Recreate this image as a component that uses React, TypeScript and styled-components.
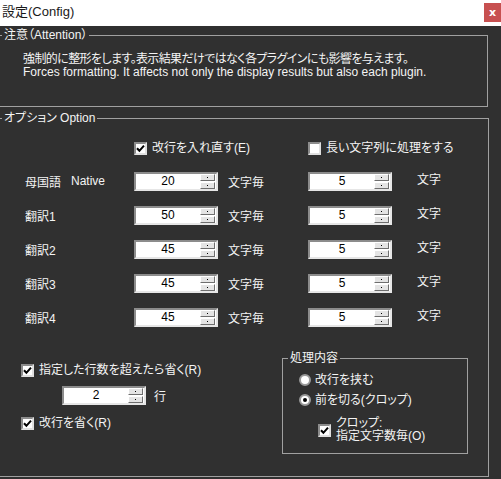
import React from 'react';
import styled, { createGlobalStyle } from 'styled-components';

const GlobalStyle = createGlobalStyle`
  html, body {
    margin: 0;
    padding: 0;
    background: #303030;
  }
  body {
    font-family: "Liberation Sans", "Noto Sans CJK JP", sans-serif;
    font-size: 12px;
    font-feature-settings: "palt";
  }
`;

interface SpinProps {
  value: number;
}

const Spin: React.FC<SpinProps> = ({ value }) => (
  <SpinField>
    <SpinValue>{value}</SpinValue>
    <SpinButtons>
      <SpinButton />
      <SpinButton />
    </SpinButtons>
  </SpinField>
);

interface CheckProps {
  checked?: boolean;
  children: React.ReactNode;
}

const Check: React.FC<CheckProps> = ({ checked = false, children }) => (
  <CheckRow>
    <CheckBox>
      {checked && (
        <svg width="9" height="9" viewBox="0 0 9 9">
          <path d="M1 4.2 L3.4 6.8 L8 1.6" fill="none" stroke="#000" strokeWidth="2" />
        </svg>
      )}
    </CheckBox>
    <CheckLabel>{children}</CheckLabel>
  </CheckRow>
);

const Radio: React.FC<CheckProps> = ({ checked = false, children }) => (
  <RadioRow>
    <RadioCircle $checked={checked} />
    <CheckLabel>{children}</CheckLabel>
  </RadioRow>
);

const rows = [
  { label: '翻訳1', main: 50, sub: 5 },
  { label: '翻訳2', main: 45, sub: 5 },
  { label: '翻訳3', main: 45, sub: 5 },
  { label: '翻訳4', main: 45, sub: 5 },
];

export default function App() {
  return (
    <Window>
      <GlobalStyle />
      <TitleBar>
        <Title>設定(Config)</Title>
        <CloseButton>x</CloseButton>
      </TitleBar>
      <Body>
        <GroupBox $width={492} $height={80}>
          <Legend>注意（Attention）</Legend>
          <AttentionText>
            <JpLine>強制的に整形をします。表示結果だけではなく各プラグインにも影響を与えます。</JpLine>
            <br />
            Forces formatting. It affects not only the display results but also each plugin.
          </AttentionText>
        </GroupBox>

        <OptionBox $width={493} $height={367}>
          <Legend>オプション Option</Legend>
          <OptionContent>
            <HeaderRow>
              <HeaderCell $col={2}>
                <Check checked>改行を入れ直す(E)</Check>
              </HeaderCell>
              <HeaderCell $col={4}>
                <Check>長い文字列に処理をする</Check>
              </HeaderCell>
            </HeaderRow>

            <OptionGrid>
              <RowLabel>
                母国語<LabelSub>Native</LabelSub>
              </RowLabel>
              <Spin value={20} />
              <Unit>文字毎</Unit>
              <Spin value={5} />
              <Unit $raised>文字</Unit>

              {rows.map((r) => (
                <React.Fragment key={r.label}>
                  <RowLabel>{r.label}</RowLabel>
                  <Spin value={r.main} />
                  <Unit>文字毎</Unit>
                  <Spin value={r.sub} />
                  <Unit $raised>文字</Unit>
                </React.Fragment>
              ))}
            </OptionGrid>

            <BottomArea>
              <LeftColumn>
                <Check checked>指定した行数を超えたら省く(R)</Check>
                <LineLimitRow>
                  <Spin value={2} />
                  <Unit>行</Unit>
                </LineLimitRow>
                <BottomCheck>
                  <Check checked>改行を省く(R)</Check>
                </BottomCheck>
              </LeftColumn>

              <ProcessBox $width={186} $height={104}>
                <Legend>処理内容</Legend>
                <ProcessContent>
                  <Radio>改行を挟む</Radio>
                  <Radio checked>前を切る(クロップ)</Radio>
                  <CropCheck>
                    <Check checked>
                      クロップ:
                      <br />
                      指定文字数毎(O)
                    </Check>
                  </CropCheck>
                </ProcessContent>
              </ProcessBox>
            </BottomArea>
          </OptionContent>
        </OptionBox>
      </Body>
    </Window>
  );
}

const Window = styled.div`
  width: 501px;
  height: 479px;
  overflow: hidden;
  display: flex;
  flex-direction: column;
  background: #303030;
`;

const TitleBar = styled.div`
  height: 26px;
  flex-shrink: 0;
  background: #ffffff;
  display: flex;
  justify-content: space-between;
  align-items: flex-start;
`;

const Title = styled.div`
  padding: 2px 0 0 2px;
  line-height: 20px;
  font-size: 13px;
  color: #1a1a1a;
`;

const CloseButton = styled.div`
  margin-top: 3px;
  width: 17px;
  height: 19px;
  background: #c75050;
  color: #ffffff;
  font-family: "DejaVu Sans", sans-serif;
  font-weight: bold;
  font-size: 11px;
  display: flex;
  align-items: center;
  justify-content: center;
`;

const Body = styled.div`
  flex: 1;
  background: #303030;
  color: #f4f4f4;
  padding-top: 1px;
`;

const GroupBox = styled.fieldset<{ $width: number; $height: number }>`
  box-sizing: border-box;
  width: ${(p) => p.$width}px;
  height: ${(p) => p.$height}px;
  margin: 0 0 0 -4px;
  padding: 0;
  border: 1px solid #a0a0a0;
  min-inline-size: 0;
`;

const OptionBox = styled(GroupBox)`
  margin-top: 3px;
`;

const OptionContent = styled.div`
  padding: 6px 0 0 24px;
`;

const Legend = styled.legend`
  margin-left: 5px;
  padding: 0 2px;
  line-height: 16px;
  font-size: 12px;
  color: #f4f4f4;
`;

const AttentionText = styled.div`
  padding: 10px 0 0 26px;
  line-height: 13px;
`;

const JpLine = styled.span`
  letter-spacing: -0.6px;
`;

const columns = '109px 94px 80px 109px auto';

const HeaderRow = styled.div`
  margin-left: 4px;
  height: 32px;
  display: grid;
  grid-template-columns: ${columns};
  align-items: center;
`;

const HeaderCell = styled.div<{ $col: number }>`
  grid-column: ${(p) => p.$col} / span 2;
`;

const OptionGrid = styled.div`
  margin-left: 4px;
  display: grid;
  grid-template-columns: ${columns};
  grid-auto-rows: 34px;
  align-items: center;
`;

const RowLabel = styled.div`
  display: flex;
  align-items: center;
`;

const LabelSub = styled.span`
  margin-left: 10px;
`;

const Unit = styled.div<{ $raised?: boolean }>`
  padding-bottom: ${(p) => (p.$raised ? 6 : 0)}px;
`;

const SpinField = styled.div`
  box-sizing: border-box;
  width: 84px;
  height: 19px;
  background: #ffffff;
  border-style: solid;
  border-width: 2px;
  border-color: #8c8c8c #e6e6e6 #e6e6e6 #8c8c8c;
  display: flex;
`;

const SpinValue = styled.div`
  flex: 1;
  text-align: center;
  line-height: 15px;
  color: #000000;
  font-size: 12px;
`;

const SpinButtons = styled.div`
  width: 15px;
  display: flex;
  flex-direction: column;
  gap: 1px;
  padding: 0 1px 0 0;
`;

const SpinButton = styled.div`
  flex: 1;
  box-sizing: border-box;
  background: #e4e4e4;
  border-style: solid;
  border-width: 1px;
  border-color: #ffffff #6e6e6e #6e6e6e #ffffff;
  display: flex;
  align-items: center;
  justify-content: center;

  &::after {
    content: '';
    width: 1px;
    height: 1px;
    background: #000000;
  }
`;

const CheckRow = styled.div`
  display: flex;
  align-items: center;
  gap: 5px;
`;

const CheckBox = styled.span`
  box-sizing: border-box;
  width: 13px;
  height: 13px;
  flex-shrink: 0;
  background: #ffffff;
  border-style: solid;
  border-width: 2px;
  border-color: #8c8c8c #e0e0e0 #e0e0e0 #8c8c8c;
  display: flex;
  align-items: center;
  justify-content: center;
`;

const CheckLabel = styled.span`
  line-height: 13px;
`;

const RadioRow = styled.div`
  height: 20px;
  display: flex;
  align-items: center;
  gap: 4px;
`;

const RadioCircle = styled.span<{ $checked: boolean }>`
  box-sizing: border-box;
  width: 12px;
  height: 12px;
  border-radius: 50%;
  background: #ffffff;
  border: 2px solid #9a9a9a;
  display: flex;
  align-items: center;
  justify-content: center;

  &::after {
    content: '';
    width: 4px;
    height: 4px;
    border-radius: 50%;
    background: ${(p) => (p.$checked ? '#000000' : 'transparent')};
  }
`;

const BottomArea = styled.div`
  display: flex;
  align-items: flex-start;
`;

const LeftColumn = styled.div`
  width: 261px;
  padding-top: 30px;
`;

const LineLimitRow = styled.div`
  margin: 9px 0 0 41px;
  display: flex;
  align-items: center;
  gap: 8px;
`;

const BottomCheck = styled.div`
  margin-top: 12px;
`;

const ProcessBox = styled(GroupBox)`
  margin: 16px 0 0 0;
`;

const ProcessContent = styled.div`
  padding: 4px 0 0 16px;
`;

const CropCheck = styled.div`
  margin: 7px 0 0 19px;
`;
